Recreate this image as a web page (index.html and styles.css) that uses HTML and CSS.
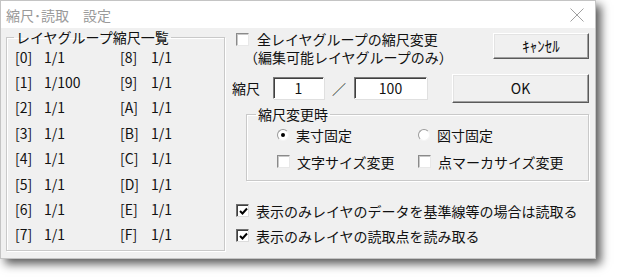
FILE: index.html
```html
<!DOCTYPE html>
<html lang="ja">
<head>
<meta charset="utf-8">
<link rel="stylesheet" href="styles.css">
</head>
<body>
<div class="window">
  <div class="titlebar">
    <span class="title">縮尺･読取　設定</span>
    <svg class="close" width="14" height="14" viewBox="0 0 14 14"><path d="M0.5 0.5 L13.5 13.5 M13.5 0.5 L0.5 13.5" stroke="#a0a0a0" stroke-width="1" fill="none"/></svg>
  </div>
  <div class="content">
    <fieldset class="group list">
      <legend>レイヤグループ縮尺一覧</legend>
      <div class="grid">
        <span>[0]</span><span>1/1</span><span>[8]</span><span>1/1</span>
        <span>[1]</span><span>1/100</span><span>[9]</span><span>1/1</span>
        <span>[2]</span><span>1/1</span><span>[A]</span><span>1/1</span>
        <span>[3]</span><span>1/1</span><span>[B]</span><span>1/1</span>
        <span>[4]</span><span>1/1</span><span>[C]</span><span>1/1</span>
        <span>[5]</span><span>1/1</span><span>[D]</span><span>1/1</span>
        <span>[6]</span><span>1/1</span><span>[E]</span><span>1/1</span>
        <span>[7]</span><span>1/1</span><span>[F]</span><span>1/1</span>
      </div>
    </fieldset>
    <div class="right">
      <div class="top-row">
        <div class="check-multi">
          <span class="cb"></span>
          <div class="lines">
            <div>全レイヤグループの縮尺変更</div>
            <div class="line2"><span class="hw">（</span>編集可能レイヤグループのみ<span class="hw">）</span></div>
          </div>
        </div>
        <div class="btn cancel">ｷｬﾝｾﾙ</div>
      </div>
      <div class="scale-row">
        <span class="scale-label">縮尺</span>
        <div class="input in1">1</div>
        <span class="slash">／</span>
        <div class="input in2">100</div>
        <div class="btn ok">OK</div>
      </div>
      <fieldset class="group change">
        <legend>縮尺変更時</legend>
        <div class="opt-row">
          <div class="opt o1"><span class="radio on"></span><span>実寸固定</span></div>
          <div class="opt"><span class="radio"></span><span>図寸固定</span></div>
        </div>
        <div class="opt-row">
          <div class="opt o1"><span class="cb"></span><span>文字サイズ変更</span></div>
          <div class="opt"><span class="cb"></span><span>点マーカサイズ変更</span></div>
        </div>
      </fieldset>
      <div class="check-row first"><span class="cb checked"><svg width="9" height="9" viewBox="0 0 9 9"><path d="M1 4 L3.5 6.5 L8 1.5" stroke="#000" stroke-width="2" fill="none"/></svg></span><span>表示のみレイヤのデータを基準線等の場合は読取る</span></div>
      <div class="check-row"><span class="cb checked"><svg width="9" height="9" viewBox="0 0 9 9"><path d="M1 4 L3.5 6.5 L8 1.5" stroke="#000" stroke-width="2" fill="none"/></svg></span><span>表示のみレイヤの読取点を読み取る</span></div>
    </div>
  </div>
</div>
</body>
</html>
```

FILE: styles.css
```css
* { box-sizing: border-box; }
html, body { margin: 0; padding: 0; background: #fff; }
body {
  font-family: "Noto Sans CJK JP", "Noto Sans", sans-serif;
  font-size: 14px;
  color: #111;
  width: 617px;
  height: 278px;
  overflow: hidden;
}
.window {
  width: 596px;
  height: 259px;
  background: #f0f0f0;
  border: 1px solid #c4c4c4;
  box-shadow: 5px 5px 9px rgba(0,0,0,0.65);
  display: flex;
  flex-direction: column;
}
.titlebar {
  height: 27px;
  background: #fff;
  display: flex;
  align-items: center;
  justify-content: space-between;
  padding: 0 11px 0 5px;
  flex: none;
}
.title { color: #9a9a9a; font-size: 14px; line-height: 16px; }
.close { display: block; margin-top: 1px; }
.content {
  display: flex;
  padding: 1px 6px 0 5px;
  gap: 11px;
}
fieldset.group {
  margin: 0;
  border: 1px solid #c9c9c9;
  box-shadow: inset 1px 1px 0 #fff, 1px 1px 0 #fff;
  padding: 0;
  min-width: 0;
}
fieldset.group legend {
  line-height: 16px;
  padding: 0 2px;
}
.list {
  width: 219px;
  height: 222px;
}
.list legend { margin-left: 7px; }
.grid {
  display: grid;
  grid-template-columns: 29px 76px 31px auto;
  grid-auto-rows: 25.4px;
  align-items: center;
  padding: 0 0 0 8px;
  line-height: 16px;
  margin-top: -1px;
}
.right {
  flex: 1;
  display: flex;
  flex-direction: column;
}
.top-row {
  display: flex;
  align-items: flex-start;
  height: 44px;
}
.check-multi {
  display: flex;
  align-items: flex-start;
  padding-top: 1px;
}
.check-multi .cb { margin-top: 3px; }
.lines { margin-left: 8px; line-height: 18px; }
.line2 { margin-left: -6px; }
.hw { font-feature-settings: "halt"; }
.cb {
  display: inline-flex;
  align-items: center;
  justify-content: center;
  width: 13px;
  height: 13px;
  background: #fff;
  border: 1px solid;
  border-color: #8a8a8a #e8e8e8 #e8e8e8 #8a8a8a;
  box-shadow: inset 1px 1px 0 #c8c8c8;
  flex: none;
}
.cb.checked {
  border-color: #6e6e6e #dcdcdc #dcdcdc #6e6e6e;
  box-shadow: inset 1px 1px 0 #404040;
}
.cb.checked svg { display: block; margin: 1px 0 0 1px; }
.btn {
  display: flex;
  align-items: center;
  justify-content: center;
  background: #f0f0f0;
  border: 1px solid;
  border-color: #fff #5a5a5a #5a5a5a #fff;
  box-shadow: inset -1px -1px 0 #a0a0a0, inset 1px 1px 0 #e3e3e3;
  line-height: 16px;
}
.cancel {
  margin-left: auto;
  width: 96px;
  height: 26px;
  margin-top: 4px;
  font-size: 15px;
}
.scale-row {
  display: flex;
  align-items: center;
  height: 30px;
  margin-top: 0;
}
.scale-label { margin-left: -4px; width: 41px; }
.input {
  height: 22px;
  background: #fff;
  border: 1px solid;
  border-color: #7a7a7a #fff #fff #7a7a7a;
  box-shadow: inset 1px 1px 0 #404040, 1px 1px 0 #e0e0e0;
  display: flex;
  align-items: center;
  justify-content: center;
  line-height: 16px;
}
.in1 { width: 51px; }
.slash { width: 30px; text-align: center; color: #333; }
.in2 { width: 73px; }
.ok {
  margin-left: auto;
  width: 137px;
  height: 29px;
}
.change {
  margin-top: 3px !important;
  margin-left: 10px !important;
  height: 75px;
}
.change legend { margin-left: 9px; }
.opt-row {
  display: flex;
  align-items: center;
  height: 27px;
  padding-left: 30px;
}
.opt-row:first-of-type { margin-top: -1px; }
.opt { display: flex; align-items: center; gap: 7px; }
.o1 { width: 141px; }
.radio {
  width: 12px;
  height: 12px;
  border-radius: 50%;
  background: #fff;
  border: 1px solid;
  border-color: #9a9a9a #f4f4f4 #f4f4f4 #9a9a9a;
  display: flex;
  align-items: center;
  justify-content: center;
  flex: none;
}
.radio.on::after {
  content: "";
  width: 4px;
  height: 4px;
  border-radius: 50%;
  background: #000;
}
.check-row {
  display: flex;
  align-items: center;
  gap: 7px;
  height: 25px;
  line-height: 16px;
}
.check-row.first { margin-top: 17px; }
```
